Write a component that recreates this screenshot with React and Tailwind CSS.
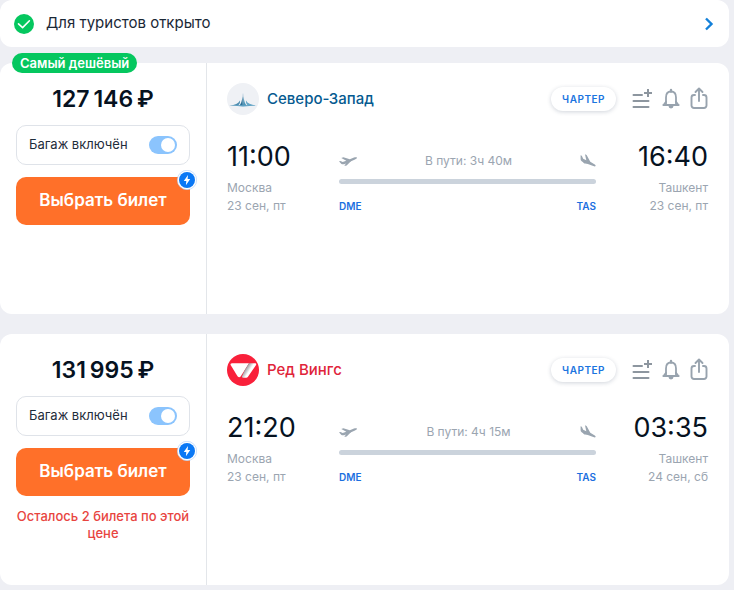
import React from "react";

function CheckBadge() {
  return (
    <svg viewBox="0 0 20 20" className="size-5 shrink-0" aria-hidden="true">
      <circle cx="10" cy="10" r="10" fill="#05c75f" />
      <path d="M4.500 9.800 8.600 13.600 15.400 6.800" fill="none" stroke="#fff" strokeWidth="1.6" strokeLinecap="round" strokeLinejoin="round" />
    </svg>
  );
}

function ChevronRight() {
  return (
    <svg viewBox="0 0 10 14" className="h-3.5 w-2.5" aria-hidden="true">
      <path d="M2 1.500 7.500 7 2 12.500" fill="none" stroke="#1380d9" strokeWidth="2.4" />
    </svg>
  );
}

function BoltBadge() {
  return (
    <svg viewBox="0 0 20 20" className="size-5" aria-hidden="true">
      <circle cx="10" cy="10" r="9.7" fill="#fff" stroke="#a9cdfb" strokeWidth="0.6" />
      <circle cx="10" cy="10" r="8" fill="#0a78f5" />
      <path d="M11 5 6.800 11h2.500L8.900 15.200 13.200 9h-2.600z" fill="#fff" />
    </svg>
  );
}

function AddToListIcon() {
  return (
    <svg viewBox="0 0 20 20" className="h-5 w-5" fill="none" stroke="#8d969f" strokeWidth="2" aria-hidden="true">
      <path d="M1.500 7H10M1.500 13h15M1.500 19h15" strokeLinecap="round" />
      <path d="M16 1v8M12 5h8" />
    </svg>
  );
}

function BellIcon() {
  return (
    <svg viewBox="0 0 18 21" className="h-[21px] w-[18px]" fill="none" stroke="#98a3ae" strokeWidth="1.8" aria-hidden="true">
      <path d="M4 16.500V9.400C4 5.600 6 3.500 9 3.500s5 2.100 5 5.900v7.100" />
      <path d="M1.300 17h15.400M4 13.800 1.600 17M14 13.800l2.400 3.200" strokeLinecap="round" />
      <path d="M9 2v1.500" strokeWidth="2.400" strokeLinecap="round" />
      <path d="M6.500 18h5a2.500 2.500 0 0 1-5 0z" fill="#98a3ae" stroke="none" />
    </svg>
  );
}

function ShareIcon() {
  return (
    <svg viewBox="0 0 18 22" className="h-[22px] w-[18px]" fill="none" stroke="#98a3ae" strokeWidth="1.9" strokeLinecap="round" strokeLinejoin="round" aria-hidden="true">
      <path d="M5 8H4a2.500 2.500 0 0 0-2.500 2.500v8A2.500 2.500 0 0 0 4 21h10a2.500 2.500 0 0 0 2.500-2.500v-8A2.500 2.500 0 0 0 14 8h-1" />
      <path d="M9 14V1.800M5.500 5 9 1.500 12.500 5" />
    </svg>
  );
}

function DepartIcon() {
  return (
    <svg viewBox="0 0 18 10" className="h-2.5 w-[18px]" fill="#9aa5b0" aria-hidden="true">
      <path d="M0 5.300 1.500 5l2.200 1.100 3.600-1.400L2.300 2 4.400 1.300l6.400 1.900L15 1.500c1.400-.5 2.600-.5 2.900.1.200.7-.7 1.400-1.900 1.900L6.500 7.800C4.500 8.600 3 8.500 2.200 7.800z" />
      <path d="m12.600 4.600-5 4.800-2.300.6 2.500-4z" />
    </svg>
  );
}

function ArriveIcon() {
  return (
    <svg viewBox="0 0 16 14" className="h-3.5 w-4" fill="#9aa5b0" aria-hidden="true">
      <path d="M.6 1.300 1.800 1.800l1.400 3L6.300 6.300 5 .2l1.600.9 3.700 6.700 3.700 2.100c1.200.7 1.800 1.500 1.600 2.100-.3.500-1.200.5-2.300.1L3.700 8.400C1.700 7.600.7 6.600.6 5.300z" />
      <path d="M10.300 9.500 4.300 9.400 3 8l5-.8z" />
    </svg>
  );
}

function NorthWestLogo() {
  return (
    <svg viewBox="0 0 32 32" className="size-8" aria-hidden="true">
      <circle cx="16" cy="16" r="16" fill="#eff1f5" />
      <path d="M2.500 22.500C8 22 11.500 20.500 13 17.500c.3 2-.5 4-2 5z" fill="#4f8db0" />
      <path d="M29.500 22.500C24 22 20.500 20.500 19 17.500c-.3 2 .5 4 2 5z" fill="#64a6c6" />
      <path d="M12.500 22.500c1.400-1.500 2.500-4.500 3-9l.1 9z" fill="#2b7199" />
      <path d="M19.500 22.500c-1.400-1.500-2.500-4.500-3-9l-.1 9z" fill="#4b95b8" />
      <path d="M15.500 22.500 16 9.500l.5 13z" fill="#1c6b96" />
      <path d="M2 22.300h28L16 23.600z" fill="#4b96bd" />
    </svg>
  );
}

function RedWingsLogo() {
  return (
    <svg viewBox="0 0 32 32" className="size-8" aria-hidden="true">
      <defs>
        <linearGradient id="wing" gradientUnits="userSpaceOnUse" x1="17.500" y1="15" x2="23" y2="18.500">
          <stop offset="0" stopColor="#8a8a90" />
          <stop offset="0.800" stopColor="#ffffff" />
        </linearGradient>
      </defs>
      <circle cx="16" cy="16" r="16" fill="#f9203a" />
      <path d="M3.500 10.700Q3.300 9.200 5 9.200H22L13.800 22.300Q12.300 24.300 10.500 22.300z" fill="#fff" />
      <path d="M22 9.200h6.300q1.500.4.600 2L20.800 23q-.5.800-1.500.8H16q-1.600-.2-1-1.600l2.800-6.300z" fill="url(#wing)" />
    </svg>
  );
}

const tickets = [
  {
    id: "nw",
    badge: "Самый дешёвый",
    price: "127\u2009146\u2009₽",
    airline: "Северо-Запад",
    nameClass: "text-[#055a90]",
    Logo: NorthWestLogo,
    depart: "11:00",
    arrive: "16:40",
    departDate: "23 сен, пт",
    arriveDate: "23 сен, пт",
    duration: "В пути: 3ч 40м",
  },
  {
    id: "rw",
    price: "131\u2009995\u2009₽",
    airline: "Ред Вингс",
    nameClass: "text-[#e0243a]",
    Logo: RedWingsLogo,
    depart: "21:20",
    arrive: "03:35",
    departDate: "23 сен, пт",
    arriveDate: "24 сен, сб",
    duration: "В пути: 4ч 15м",
    note: "Осталось 2 билета по этой цене",
  },
];

function Ticket({ ticket }) {
  const { Logo } = ticket;
  return (
    <article className="relative flex min-h-[251px] rounded-xl bg-white">
      {ticket.badge && (
        <span className="absolute -top-2.5 left-3 rounded-full bg-[#05c75f] px-2 text-[13px] leading-5 font-semibold text-white">
          {ticket.badge}
        </span>
      )}
      <div className="w-[207px] shrink-0 border-r border-[#e3e6ea] px-4 pt-5">
        <p className="text-center text-[23px] leading-8 font-semibold text-[#06121f]">{ticket.price}</p>
        <label
          htmlFor={`bag-${ticket.id}`}
          className="mt-2.5 flex h-10 items-center justify-between rounded-[10px] border border-[#dfe3e9] px-3 text-[13px] text-[#1f2d3b]"
        >
          Багаж включён
          <input
            id={`bag-${ticket.id}`}
            type="checkbox"
            defaultChecked
            className="h-[18px] w-7 appearance-none rounded-full bg-[#8bc4fd] p-0.5 before:block before:size-3.5 before:rounded-full before:bg-white checked:before:ml-auto"
          />
        </label>
        <div className="relative mt-3">
          <button type="button" className="h-12 w-full rounded-[10px] bg-[#ff7029] text-[17px] font-semibold text-white">
            Выбрать билет
          </button>
          <span className="absolute -top-[7px] -right-[7px]">
            <BoltBadge />
          </span>
        </div>
        {ticket.note && (
          <p className="-mx-1 mt-3 text-center text-[13px] leading-[17px] font-medium text-[#e8453f]">{ticket.note}</p>
        )}
      </div>

      <div className="min-w-0 flex-1 pt-5 pr-[21px] pl-5">
        <header className="flex h-8 items-center">
          <Logo />
          <h2 className={`ml-2 text-[15px] leading-6 font-medium ${ticket.nameClass}`}>{ticket.airline}</h2>
          <span className="ml-auto rounded-full bg-white px-[11px] text-[10px] leading-6 font-semibold tracking-wider text-[#1b75df] shadow-[0_1px_4px_rgba(40,60,90,0.22)]">
            ЧАРТЕР
          </span>
          <div className="ml-4 flex items-center gap-2.5 pb-0.5">
            <button type="button" aria-label="Добавить в список">
              <AddToListIcon />
            </button>
            <button type="button" aria-label="Следить за ценой">
              <BellIcon />
            </button>
            <button type="button" aria-label="Поделиться">
              <ShareIcon />
            </button>
          </div>
        </header>

        <div className="mt-6 flex">
          <div className="w-28 shrink-0 text-[12px] leading-[18px] text-[#9ba5b1]">
            <p className="mb-1 text-[27px] leading-9 text-[#06121f]">{ticket.depart}</p>
            <p>Москва</p>
            <p>{ticket.departDate}</p>
          </div>
          <div className="flex-1 pt-3">
            <div className="flex h-5 items-center justify-between">
              <DepartIcon />
              <span className="text-[12px] text-[#9ba5b1]">{ticket.duration}</span>
              <ArriveIcon />
            </div>
            <div className="mt-2 h-[5px] rounded-full bg-[#cbd3dc]" />
            <div className="mt-3 flex justify-between text-[10px] leading-5 font-semibold text-[#1b6fe0]">
              <span>DME</span>
              <span>TAS</span>
            </div>
          </div>
          <div className="w-28 shrink-0 text-right text-[12px] leading-[18px] text-[#9ba5b1]">
            <p className="mb-1 text-[27px] leading-9 text-[#06121f]">{ticket.arrive}</p>
            <p>Ташкент</p>
            <p>{ticket.arriveDate}</p>
          </div>
        </div>
      </div>
    </article>
  );
}

export default function App() {
  return (
    <main className="min-h-screen bg-[#eeeff4] pr-[5px] pb-[5px] font-['Inter',sans-serif]">
      <button type="button" className="flex h-[47px] w-full items-center rounded-xl bg-white pr-[15px] pl-3.5 text-left text-[15px] text-[#1a2836]">
        <CheckBadge />
        <span className="ml-3 flex-1">Для туристов открыто</span>
        <ChevronRight />
      </button>
      <div className="mt-4 flex flex-col gap-5">
        {tickets.map((ticket) => (
          <Ticket key={ticket.id} ticket={ticket} />
        ))}
      </div>
    </main>
  );
}
